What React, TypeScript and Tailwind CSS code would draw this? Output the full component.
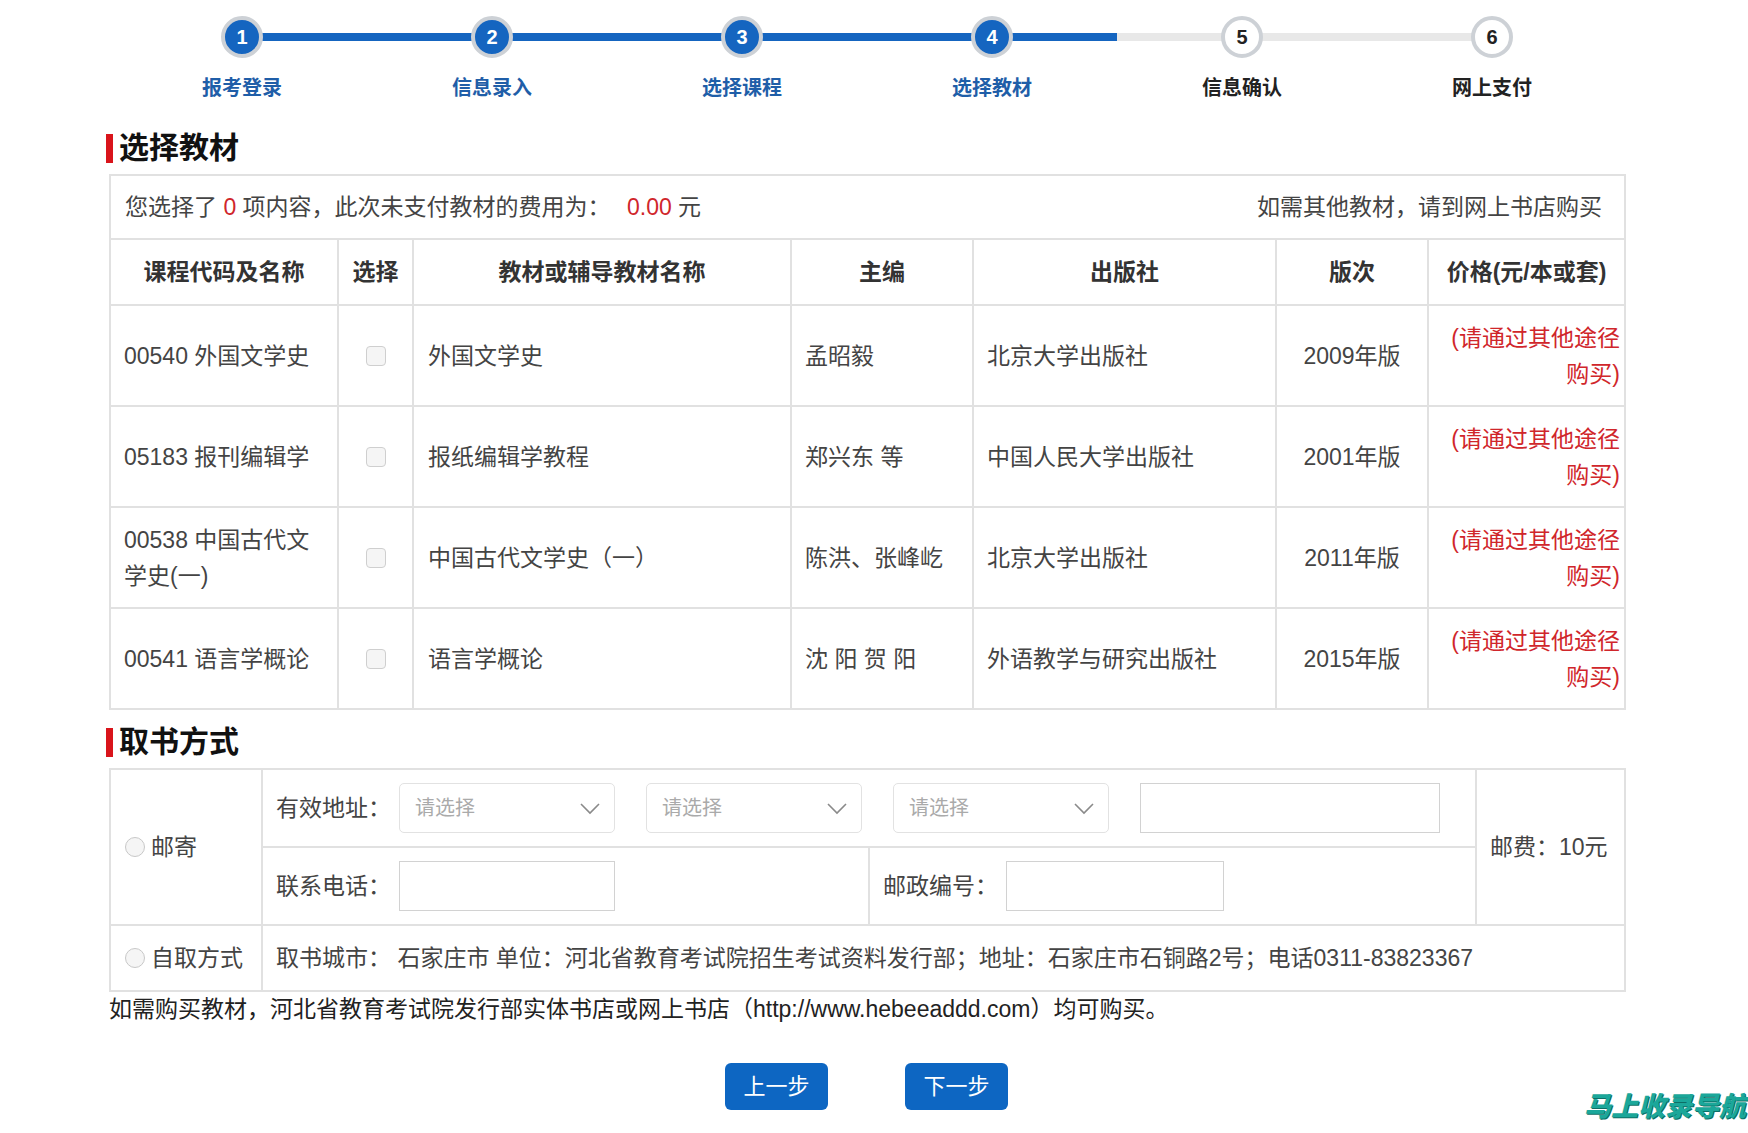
import React from "react";

const steps = [
  { n: 1, label: "报考登录", done: true },
  { n: 2, label: "信息录入", done: true },
  { n: 3, label: "选择课程", done: true },
  { n: 4, label: "选择教材", done: true },
  { n: 5, label: "信息确认", done: false },
  { n: 6, label: "网上支付", done: false },
];

const books = [
  { course: "00540 外国文学史", name: "外国文学史", editor: "孟昭毅", press: "北京大学出版社", ed: "2009年版" },
  { course: "05183 报刊编辑学", name: "报纸编辑学教程", editor: "郑兴东 等", press: "中国人民大学出版社", ed: "2001年版" },
  { course: "00538 中国古代文学史(一)", name: "中国古代文学史（一）", editor: "陈洪、张峰屹", press: "北京大学出版社", ed: "2011年版" },
  { course: "00541 语言学概论", name: "语言学概论", editor: "沈 阳 贺 阳", press: "外语教学与研究出版社", ed: "2015年版" },
];

const Stepper = () => (
  <div className="flex ml-[117px] pt-[16px]">
    {steps.map((s, i) => {
      const leftBlue = i > 0 && i <= 3;
      const rightBlue = i < 4;
      return (
        <div key={s.n} className="w-[250px] flex flex-col items-center">
          <div className="relative w-full h-[42px] flex justify-center items-center">
            {i > 0 && (
              <div className={`absolute left-0 top-[17px] h-[8px] w-[125px] ${leftBlue ? "bg-[#1565c0]" : "bg-[#e8e8e8]"}`} />
            )}
            {i < steps.length - 1 && (
              <div className={`absolute right-0 top-[17px] h-[8px] w-[125px] ${rightBlue ? "bg-[#1565c0]" : "bg-[#e8e8e8]"}`} />
            )}
            <div
              className={`relative z-10 w-[42px] h-[42px] rounded-full border-[4px] border-[#cdd1d6] flex items-center justify-center text-[20px] font-bold ${
                s.done ? "bg-[#1565c0] text-white" : "bg-white text-[#222]"
              }`}
            >
              {s.n}
            </div>
          </div>
          <div className={`mt-[16px] text-[20px] font-bold leading-[28px] ${s.done ? "text-[#1f5ea8]" : "text-[#222]"}`}>
            {s.label}
          </div>
        </div>
      );
    })}
  </div>
);

const SectionTitle = ({ text }: { text: string }) => (
  <div className="flex items-center h-[40px] ml-[106px]">
    <div className="w-[7px] h-[29px] bg-[#d9141b]" />
    <div className="ml-[6px] text-[30px] font-bold text-[#111] leading-[40px]">{text}</div>
  </div>
);

const Chevron = () => (
  <svg width="24" height="24" viewBox="0 0 24 24" fill="none" stroke="#8a8a8a" strokeWidth="1.6">
    <path d="M3 8l9 9 9-9" />
  </svg>
);

const Select = () => (
  <div className="w-[216px] h-[50px] border border-[#e2e2e2] rounded-[5px] flex items-center justify-between pl-[15px] pr-[12px] text-[20px] text-[#aaa]">
    <span>请选择</span>
    <Chevron />
  </div>
);

const Radio = () => <div className="w-[20px] h-[20px] rounded-full border border-[#c8c8c8] bg-[#f5f5f5]" />;

export default function App() {
  const cell = "border-2 border-[#e1e1e1]";
  return (
    <div className="relative w-[1748px] h-[1133px] bg-white overflow-hidden text-[#333] font-['Liberation_Sans','Noto_Sans_CJK_SC',sans-serif]">
      <Stepper />

      <div className="mt-[26px]">
        <SectionTitle text="选择教材" />
      </div>

      <table className="ml-[109px] mt-[6px] w-[1515px] table-fixed border-collapse text-[23px]">
        <colgroup>
          <col className="w-[228px]" />
          <col className="w-[75px]" />
          <col className="w-[378px]" />
          <col className="w-[182px]" />
          <col className="w-[303px]" />
          <col className="w-[152px]" />
          <col className="w-[197px]" />
        </colgroup>
        <tbody>
          <tr className="h-[64px]">
            <td colSpan={7} className={`${cell} px-[14px] text-[#444]`}>
              <div className="flex justify-between pr-[8px]">
                <span>
                  您选择了 <span className="text-[#d0262b]">0</span> 项内容，此次未支付教材的费用为：{" "}
                  <span className="text-[#d0262b] ml-[10px]">0.00</span> 元
                </span>
                <span>如需其他教材，请到网上书店购买</span>
              </div>
            </td>
          </tr>
          <tr className="h-[66px] font-bold text-[#333]">
            <td className={`${cell} text-center`}>课程代码及名称</td>
            <td className={`${cell} text-center`}>选择</td>
            <td className={`${cell} text-center`}>教材或辅导教材名称</td>
            <td className={`${cell} text-center`}>主编</td>
            <td className={`${cell} text-center`}>出版社</td>
            <td className={`${cell} text-center`}>版次</td>
            <td className={`${cell} text-center`}>价格(元/本或套)</td>
          </tr>
          {books.map((b) => (
            <tr key={b.course} className="h-[101px] text-[#444] leading-[36px]">
              <td className={`${cell} px-[13px]`}>{b.course}</td>
              <td className={`${cell}`}>
                <div className="mx-auto w-[20px] h-[20px] rounded-[4px] border border-[#cfcfcf] bg-[#f5f5f5]" />
              </td>
              <td className={`${cell} px-[14px]`}>{b.name}</td>
              <td className={`${cell} px-[13px]`}>{b.editor}</td>
              <td className={`${cell} px-[13px]`}>{b.press}</td>
              <td className={`${cell} text-center`}>{b.ed}</td>
              <td className={`${cell} pr-[4px] text-right text-[#d0262b]`}>
                (请通过其他途径
                <br />
                购买)
              </td>
            </tr>
          ))}
        </tbody>
      </table>

      <div className="mt-[12px]">
        <SectionTitle text="取书方式" />
      </div>

      <table className="ml-[109px] mt-[6px] w-[1515px] table-fixed border-collapse text-[23px] text-[#444]">
        <colgroup>
          <col className="w-[152px]" />
          <col className="w-[607px]" />
          <col className="w-[607px]" />
          <col className="w-[149px]" />
        </colgroup>
        <tbody>
          <tr className="h-[78px]">
            <td rowSpan={2} className={`${cell} px-[14px]`}>
              <div className="flex items-center gap-[6px]">
                <Radio />
                <span>邮寄</span>
              </div>
            </td>
            <td colSpan={2} className={`${cell} px-[13px]`}>
              <div className="flex items-center">
                <span className="w-[123px]">有效地址：</span>
                <div className="flex items-center gap-[31px]">
                  <Select />
                  <Select />
                  <Select />
                  <div className="w-[300px] h-[50px] border border-[#d2d2d2]" />
                </div>
              </div>
            </td>
            <td rowSpan={2} className={`${cell} px-[13px]`}>
              邮费：10元
            </td>
          </tr>
          <tr className="h-[78px]">
            <td className={`${cell} px-[13px]`}>
              <div className="flex items-center">
                <span className="w-[123px]">联系电话：</span>
                <div className="w-[216px] h-[50px] border border-[#d2d2d2]" />
              </div>
            </td>
            <td className={`${cell} px-[13px]`}>
              <div className="flex items-center">
                <span className="w-[123px]">邮政编号：</span>
                <div className="w-[218px] h-[50px] border border-[#d2d2d2]" />
              </div>
            </td>
          </tr>
          <tr className="h-[66px]">
            <td className={`${cell} px-[14px]`}>
              <div className="flex items-center gap-[6px]">
                <Radio />
                <span>自取方式</span>
              </div>
            </td>
            <td colSpan={3} className={`${cell} px-[13px]`}>
              取书城市： 石家庄市 单位：河北省教育考试院招生考试资料发行部；地址：石家庄市石铜路2号；电话0311-83823367
            </td>
          </tr>
        </tbody>
      </table>

      <div className="ml-[109px] mt-[1px] text-[23px] text-[#222] leading-[32px]">
        如需购买教材，河北省教育考试院发行部实体书店或网上书店（http://www.hebeeaddd.com）均可购买。
      </div>

      <div className="ml-[109px] w-[1515px] mt-[38px] flex justify-center gap-[77px]">
        <button className="w-[103px] h-[47px] rounded-[6px] bg-[#0d66c2] text-white text-[22px]">上一步</button>
        <button className="w-[103px] h-[47px] rounded-[6px] bg-[#0d66c2] text-white text-[22px]">下一步</button>
      </div>

      <div className="absolute right-[2px] bottom-[6px] text-[27px] font-black italic text-[#1ba79a] [text-shadow:1px_1px_0_#0d6f66]">
        马上收录导航
      </div>
    </div>
  );
}
